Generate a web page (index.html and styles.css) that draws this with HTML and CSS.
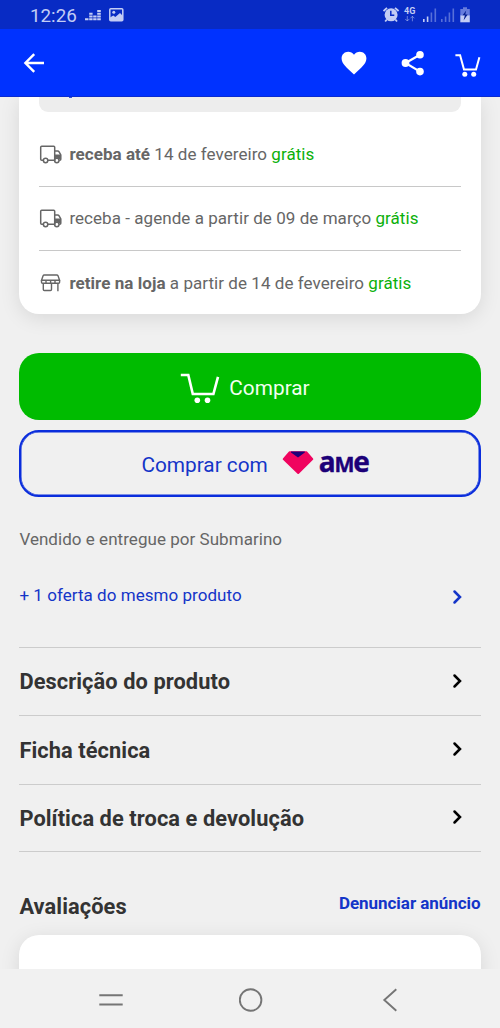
FILE: index.html
```
<!DOCTYPE html>
<html lang="pt-BR">
<head>
<meta charset="utf-8">
<title>Submarino</title>
<link rel="stylesheet" href="styles.css">
</head>
<body>
<div class="status">
  <span class="clock">12:26</span>
  <svg class="music" width="16" height="12" viewBox="0 0 16 12"><path d="M0 10.2h3.5M4.2 10.2h3.4M8.2 10.2h3.4M12.2 10.2h3.6M4.2 7.5h3.4M8.2 7.5h3.4M12.2 7.5h3.6M4.2 4.7h3.4M12.2 4.7h3.6M12.2 2h3.6" stroke="currentColor" stroke-width="1.9"/></svg>
  <svg class="photo" width="15" height="14" viewBox="0 0 15 14"><rect x=".8" y=".8" width="13" height="12" rx="1" fill="none" stroke="currentColor" stroke-width="1.5"/><circle cx="4.8" cy="4.3" r="1.5" fill="currentColor"/><path d="M1 9.5l3.3-2 2 1.4L11 5l3 3v5H1z" fill="currentColor"/></svg>
  <svg class="signals" width="89" height="20" viewBox="0 0 89 20">
    <g fill="currentColor"><circle cx="8.1" cy="9.8" r="6.5"/><path d="M.5 6L4 2.8M12 2.8L15.6 6M3.8 14.5l-1.6 2M12.4 14.5l1.6 2" stroke="currentColor" stroke-width="1.8"/></g>
    <path d="M7.8 5.8v4.5h3.5" fill="none" stroke="#082bc4" stroke-width="1.5"/>
    <text class="network" x="21" y="9">4G</text>
    <path d="M24.3 11v5M22.3 14l2 2 2-2M29.4 16.3v-5M27.4 13.3l2-2 2 2" fill="none" stroke="currentColor" opacity=".5"/>
    <g fill="currentColor"><path d="M40 14h1.6v3H40zM43.8 11.5h1.6V17h-1.6z"/><path opacity=".42" d="M47.6 7.5h1.6V17h-1.6zM51.5 3.5h1.6V17h-1.6zM58 14h1.6v3H58zM61.8 11.5h1.6V17h-1.6zM65.6 7.5h1.6V17h-1.6zM69.5 3.5h1.6V17h-1.6z"/><path opacity=".5" d="M80 2.2h4V4h-4zM77.3 4h9.5v7h-9.5z"/><path d="M77.3 10.5h9.5v6.8h-9.5z"/></g>
    <path d="M83.2 5.5l-3.6 4.8h2.3l-1.3 5.2 4.1-6h-2.4z" fill="#06208f"/>
  </svg>
</div>
<header class="appbar">
  <svg class="back" width="22" height="20" viewBox="0 0 22 20"><path d="M21 10H2.4M11.2 1.2L2.4 10l8.8 8.8" fill="none" stroke="#fff" stroke-width="2.4"/></svg>
  <svg class="heart" width="26" height="24" viewBox="0 0 26 24"><path d="M13 23.5C5.5 16.7.6 12.6.6 7.5.6 3.6 3.5.8 7.2.8 9.5.8 11.7 1.9 13 3.7 14.3 1.9 16.5.8 18.8.8c3.7 0 6.6 2.8 6.6 6.7 0 5.1-4.9 9.2-12.4 16z" fill="#fff"/></svg>
  <svg class="share" width="24" height="26" viewBox="0 0 24 26"><path d="M19 4.7L4.5 13 19 21.6" fill="none" stroke="#fff" stroke-width="2.2"/><g fill="#fff"><circle cx="19" cy="4.7" r="3.8"/><circle cx="4.5" cy="13" r="3.9"/><circle cx="19" cy="21.6" r="3.8"/></g></svg>
  <svg class="cart" width="26" height="24" viewBox="0 0 26 24"><path d="M.4 2.2h4.7L9 16.6h12l3.4-12.4" fill="none" stroke="#fff" stroke-width="2"/><circle cx="9.8" cy="21.2" r="2.5" fill="#fff"/><circle cx="18.7" cy="21.2" r="2.5" fill="#fff"/></svg>
</header>
<main class="page">
  <section class="card shipping">
    <div class="field"><i class="field-mark"></i></div>
    <div class="option">
      <svg class="ico" width="24" height="20" viewBox="0 0 24 20"><use href="#truck"/></svg>
      <span class="line"><b>receba até</b> 14 de fevereiro <em>grátis</em></span>
    </div>
    <div class="option">
      <svg class="ico" width="24" height="20" viewBox="0 0 24 20"><use href="#truck"/></svg>
      <span class="line">receba - agende a partir de 09 de março <em>grátis</em></span>
    </div>
    <div class="option">
      <svg class="ico" width="24" height="20" viewBox="0 0 24 20"><g fill="none" stroke="#666" stroke-width="1.4"><path d="M5.3 2h12.4q1 0 1.3.8l1.6 4.5H2.5l1.6-4.5q.3-.8 1.2-.8zM2.5 7.3v2q0 1 1 1h16.1q1 0 1-1v-2M7 7.3v2.9M11.6 7.3v2.9M16 7.3v2.9M4.3 10.3v6.2q0 1 1 1h6.2q1 0 1-1v-6.2M18.9 10.3v8"/></g></svg>
      <span class="line"><b>retire na loja</b> a partir de 14 de fevereiro <em>grátis</em></span>
    </div>
  </section>
  <button class="buy">
    <svg width="40" height="32" viewBox="0 0 40 32"><path d="M.8 3h7.5l4.5 19h20.6l4.6-17.2" fill="none" stroke="#fff" stroke-width="2.6"/><circle cx="17.3" cy="28.3" r="2.8" fill="#fff"/><circle cx="27.5" cy="28.3" r="2.8" fill="#fff"/></svg>
    <span>Comprar</span>
  </button>
  <button class="buy-ame">
    <span class="ame-label">Comprar com</span>
    <svg class="gem" width="32" height="24" viewBox="0 0 32 24"><path d="M7.5 1.3h17l5.8 6.8L16.2 22 1.7 8.1z" fill="#f0045f" stroke="#f0045f" stroke-width="2" stroke-linejoin="round"/><path d="M9 .4h13.8v1.2L16 6.4 9 1.6z" fill="#1c0078"/></svg>
    <span class="ame">a<span class="ame-m">M</span>e</span>
  </button>
  <p class="seller">Vendido e entregue por Submarino</p>
  <a class="offers"><span>+ 1 oferta do mesmo produto</span><svg class="chev" width="10" height="16" viewBox="0 0 10 16"><use href="#chevron"/></svg></a>
  <ul class="details">
    <li><span>Descrição do produto</span><svg class="chev" width="10" height="16" viewBox="0 0 10 16"><use href="#chevron"/></svg></li>
    <li><span>Ficha técnica</span><svg class="chev" width="10" height="16" viewBox="0 0 10 16"><use href="#chevron"/></svg></li>
    <li><span>Política de troca e devolução</span><svg class="chev" width="10" height="16" viewBox="0 0 10 16"><use href="#chevron"/></svg></li>
  </ul>
  <div class="reviews-head"><h2>Avaliações</h2><a>Denunciar anúncio</a></div>
  <section class="card reviews"></section>
</main>
<nav class="sysnav">
  <svg width="24" height="24" viewBox="0 0 24 24"><path d="M.3 7.3h23.4M.3 16.5h23.4"/></svg>
  <svg width="24" height="24" viewBox="0 0 24 24"><circle cx="11.6" cy="12" r="10.8"/></svg>
  <svg width="24" height="24" viewBox="0 0 24 24"><path d="M18.3 1.2L6.3 12l12 10.8"/></svg>
</nav>
<svg class="defs" width="0" height="0">
  <symbol id="truck" viewBox="0 0 24 20"><g fill="none" stroke="#666" stroke-width="1.5"><path d="M4.3 16.3H2.7q-1 0-1-1V3.3q0-1 1-1h12q1 0 1 1v13H9M15.7 7h2.9q1 0 1.5.8l1.7 3.2v4.3q0 1-1 1h-.6"/><circle cx="6.6" cy="16.5" r="2.2"/><circle cx="17.8" cy="16.5" r="2.2"/></g><path d="M15.7 10.6h6v4.7h-1.5q-2.4-3.2-4.5 0z" fill="#666"/></symbol>
  <symbol id="chevron" viewBox="0 0 10 16"><path d="M2.5 2.5L8 8l-5.500 5.500" fill="none" stroke="currentColor" stroke-width="2.5" stroke-linecap="round"/></symbol>
</svg>
</body>
</html>
```
FILE: styles.css
```
* { box-sizing: border-box; }
body { margin: 0; height: 1028px; overflow: hidden; display: flex; flex-direction: column; background: #f0f0f0; font-family: Roboto, sans-serif; color: #666; }
svg { display: block; flex: none; }
.defs { position: absolute; }
.status { height: 29px; flex: none; background: #082bc4; color: #c3cdf5; display: flex; align-items: center; padding: 0 28px 0 30px; }
.clock { font-size: 18.8px; line-height: 30px; width: 55px; padding-top: 2px; }
.photo { margin-left: 8px; }
.signals { margin-left: auto; }
.network { font: bold 9px Roboto, sans-serif; fill: currentColor; }
.appbar { height: 68px; flex: none; background: #0032ff; border-bottom: 1px solid #0a2bd0; display: flex; align-items: center; padding: 0 19px 0 23px; }
.heart { margin-left: auto; }
.share { margin-left: 34px; }
.cart { margin-left: 30px; margin-top: 5px; }
.page { height: 872px; flex: none; overflow: hidden; padding: 0 19.4px; }
.card { background: #fff; border-radius: 20px; box-shadow: 0 4px 20px rgba(0,0,0,.1); }
.shipping { height: 217.4px; border-radius: 0 0 20px 20px; padding: 0 19.5px; }
.field { height: 15px; margin-bottom: 10px; background: #ededed; border-radius: 0 0 9px 9px; padding-left: 30px; }
.field-mark { display: block; width: 3px; height: 1px; background: #3355d8; }
.option { height: 64.5px; display: flex; align-items: center; border-bottom: 1.5px solid #c8c8c8; }
.option:last-child { border: 0; height: 64px; }
.ico { margin-right: 6.5px; }
.line { font-size: 17px; letter-spacing: .05px; white-space: nowrap; }
.line em { font-style: normal; color: #0bb00b; }
button { font: 20.8px Roboto, sans-serif; width: 100%; display: flex; align-items: center; padding: 0; border-radius: 20px; }
.buy { height: 67px; margin-top: 39px; border: 0; background: #00bb00; color: #f2fff2; justify-content: center; gap: 9px; padding: 2px 10px 0 0; }
.buy-ame { height: 67px; margin-top: 10px; border: 2px solid #0a2ddc; box-shadow: inset 0 0 0 .5px #0a2ddc; background: none; color: #1435c8; padding-left: 120px; }
.ame-label { padding-top: 2px; }
.gem { margin-left: 14.6px; margin-top: -1px; }
.ame { font: bold 28px/24px "Open Sans", sans-serif; color: #1c0078; margin-left: 4.4px; margin-top: -2px; letter-spacing: -1.2px; -webkit-text-stroke: .4px #1c0078; white-space: nowrap; }
.ame-m { font-size: 21.2px; }
.seller { margin: 31px 0 0; font-size: 17px; line-height: 22px; letter-spacing: .04px; }
.offers { margin-top: 35px; height: 24px; display: flex; align-items: center; justify-content: space-between; padding-right: 19px; color: #1435c8; font-size: 17px; letter-spacing: .04px; }
.offers span { margin-top: -4px; }
.details { list-style: none; margin: 37.6px 0 0; padding: 0; border-top: 1.5px solid #ccc; color: #333; font-size: 21.8px; letter-spacing: .08px; font-weight: bold; }
.details li { height: 68.5px; border-bottom: 1.5px solid #ccc; display: flex; align-items: center; justify-content: space-between; padding-right: 19px; }
.details li:last-child { height: 67.2px; }
.details span { padding-top: .4px; }
.details .chev { margin-top: -2px; color: #000; }
.reviews-head { display: flex; justify-content: space-between; align-items: center; height: 30px; margin-top: 39px; }
.reviews-head h2 { margin: 0; font-size: 21.8px; color: #333; letter-spacing: .08px; }
.reviews-head a { font-size: 17px; letter-spacing: -.04px; font-weight: bold; color: #1435c8; margin-top: -6.600px; }
.reviews { height: 120px; margin-top: 13.4px; }
.sysnav { height: 59px; flex: none; background: #f1f1f1; display: flex; justify-content: space-between; align-items: center; padding: 3px 98px 0 99px; }
.sysnav svg { fill: none; stroke: #757575; stroke-width: 1.9; }
```
